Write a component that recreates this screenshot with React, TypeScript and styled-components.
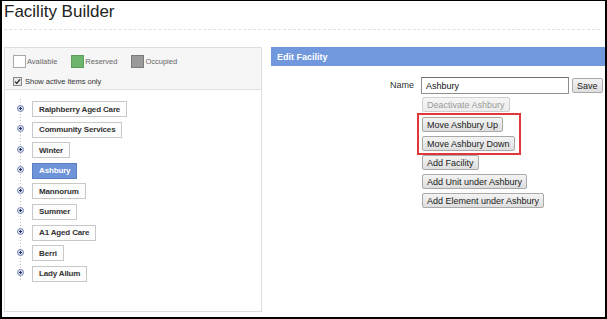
import styled, { createGlobalStyle } from "styled-components";

const GlobalStyle = createGlobalStyle`
  html, body {
    margin: 0;
    padding: 0;
    background: #fff;
  }
  body {
    font-family: "Liberation Sans", Arial, sans-serif;
    color: #333;
  }
`;

const Page = styled.div`
  width: 607px;
  height: 319px;
  box-sizing: border-box;
  border: 2px solid #000;
  border-top-width: 1px;
  overflow: hidden;
  background: #fff;
`;

const Title = styled.h1`
  margin: 0;
  padding: 1px 0 0 2px;
  font-size: 17px;
  font-weight: normal;
  line-height: 20px;
  color: #222;
`;

const Divider = styled.div`
  margin: 7px 5px 0 2px;
  border-top: 1px dashed #e2e2e2;
`;

const Columns = styled.div`
  display: flex;
  gap: 9px;
  margin-top: 17px;
  margin-left: 2px;
`;

const LeftPanel = styled.div`
  width: 258px;
  height: 265px;
  box-sizing: border-box;
  border: 1px solid #dedede;
  display: flex;
  flex-direction: column;
`;

const Legend = styled.div`
  background: #f6f6f6;
  border-bottom: 1px solid #e0e0e0;
  padding: 7px 0 0 8px;
  height: 42px;
  box-sizing: border-box;
`;

const LegendRow = styled.div`
  display: flex;
  align-items: center;
  height: 13px;
`;

const Swatch = styled.span<{ $fill: string; $edge: string }>`
  width: 13px;
  height: 13px;
  box-sizing: border-box;
  background: ${(p) => p.$fill};
  border: 1px solid ${(p) => p.$edge};
  margin-right: 1px;
`;

const LegendLabel = styled.span`
  font-size: 7.5px;
  color: #666;
  margin-right: 14px;
`;

const CheckRow = styled.label`
  display: flex;
  align-items: center;
  gap: 3px;
  margin-top: 9px;
  font-size: 7.5px;
  color: #333;
`;

const CheckBox = styled.span`
  width: 7px;
  height: 7px;
  border: 1px solid #888;
  background: #e8e8e8;
  display: flex;
  align-items: center;
  justify-content: center;
`;

const TreeList = styled.div`
  display: flex;
  flex-direction: column;
  gap: 4.6px;
  padding: 11px 0 0 12px;
  background-image: repeating-linear-gradient(
    to bottom,
    #bdbdbd 0 1px,
    transparent 1px 3px
  );
  background-size: 1px 185px;
  background-position: 15px 9px;
  background-repeat: no-repeat;
`;

const TreeRow = styled.div`
  display: flex;
  align-items: center;
  height: 16px;
`;

const Expander = styled.svg`
  width: 7px;
  height: 7px;
  margin: -2px 8px 0 0;
  flex: none;
`;

const NodeButton = styled.span<{ $active?: boolean }>`
  display: inline-flex;
  align-items: center;
  height: 16px;
  box-sizing: border-box;
  padding: 0 6px;
  font-size: 8px;
  font-weight: bold;
  letter-spacing: -0.15px;
  white-space: nowrap;
  color: ${(p) => (p.$active ? "#fff" : "#333")};
  background: ${(p) => (p.$active ? "#6f93d8" : "#fdfdfd")};
  border: 1px solid ${(p) => (p.$active ? "#5b7fc6" : "#c8c8c8")};
`;

const RightPanel = styled.div`
  flex: 1;
  display: flex;
  flex-direction: column;
`;

const PanelHeader = styled.div`
  height: 19px;
  background: #7198dd;
  color: #fff;
  font-size: 9px;
  font-weight: bold;
  display: flex;
  align-items: center;
  padding-left: 6px;
`;

const Form = styled.div`
  display: grid;
  grid-template-columns: 143px auto;
  column-gap: 7px;
  margin-top: 11px;
`;

const FieldLabel = styled.label`
  font-size: 9px;
  color: #333;
  text-align: right;
  line-height: 17px;
`;

const NameRow = styled.div`
  display: flex;
  align-items: center;
  gap: 3px;
`;

const TextInput = styled.div`
  width: 148px;
  height: 17px;
  box-sizing: border-box;
  border: 1px solid #8f8f8f;
  border-top-color: #6f6f6f;
  font-size: 9px;
  color: #111;
  display: flex;
  align-items: center;
  padding-left: 4px;
`;

const Actions = styled.div`
  grid-column: 2;
  display: flex;
  flex-direction: column;
  align-items: flex-start;
  gap: 4px;
  margin-top: 3px;
  padding-left: 1px;
`;

const ActionButton = styled.span<{ $disabled?: boolean }>`
  display: inline-flex;
  align-items: center;
  height: 15px;
  box-sizing: border-box;
  padding: 0 4px;
  font-size: 9px;
  white-space: nowrap;
  color: ${(p) => (p.$disabled ? "#9a9a9a" : "#1a1a1a")};
  background: ${(p) =>
    p.$disabled
      ? "linear-gradient(#f6f6f6, #ececec)"
      : "linear-gradient(#f4f4f4, #dedede)"};
  border: 1px solid ${(p) => (p.$disabled ? "#cfcfcf" : "#a9a9a9")};
  border-radius: 2px;
`;

const Highlight = styled.div`
  position: relative;
  display: flex;
  flex-direction: column;
  align-items: flex-start;
  gap: 4px;
  margin-top: 1px;
  &::after {
    content: "";
    position: absolute;
    top: -4px;
    bottom: -4px;
    left: -5px;
    right: -6px;
    border: 2px solid #e0373a;
  }
`;

const nodes = [
  "Ralphberry Aged Care",
  "Community Services",
  "Winter",
  "Ashbury",
  "Mannorum",
  "Summer",
  "A1 Aged Care",
  "Berri",
  "Lady Allum",
];

const PlusIcon = () => (
  <Expander viewBox="0 0 7 7">
    <circle cx="3.5" cy="3.5" r="3" fill="#d9dff0" stroke="#6a78a8" strokeWidth="0.9" />
    <path d="M2 3.5h3M3.5 2v3" stroke="#27305a" strokeWidth="1" />
  </Expander>
);

export default function App() {
  return (
    <>
      <GlobalStyle />
      <Page>
        <Title>Facility Builder</Title>
        <Divider />
        <Columns>
          <LeftPanel>
            <Legend>
              <LegendRow>
                <Swatch $fill="#fff" $edge="#a8a8a8" />
                <LegendLabel>Available</LegendLabel>
                <Swatch $fill="#6db46d" $edge="#5aa05a" />
                <LegendLabel>Reserved</LegendLabel>
                <Swatch $fill="#9a9a9a" $edge="#7a7a7a" />
                <LegendLabel>Occupied</LegendLabel>
              </LegendRow>
              <CheckRow>
                <CheckBox>
                  <svg width="7" height="7" viewBox="0 0 7 7">
                    <path d="M1 3.6l1.8 1.8L6 1.4" fill="none" stroke="#222" strokeWidth="1.3" />
                  </svg>
                </CheckBox>
                Show active items only
              </CheckRow>
            </Legend>
            <TreeList>
              {nodes.map((n) => (
                <TreeRow key={n}>
                  <PlusIcon />
                  <NodeButton $active={n === "Ashbury"}>{n}</NodeButton>
                </TreeRow>
              ))}
            </TreeList>
          </LeftPanel>
          <RightPanel>
            <PanelHeader>Edit Facility</PanelHeader>
            <Form>
              <FieldLabel>Name</FieldLabel>
              <NameRow>
                <TextInput>Ashbury</TextInput>
                <ActionButton>Save</ActionButton>
              </NameRow>
              <Actions>
                <ActionButton $disabled>Deactivate Ashbury</ActionButton>
                <Highlight>
                  <ActionButton>Move Ashbury Up</ActionButton>
                  <ActionButton>Move Ashbury Down</ActionButton>
                </Highlight>
                <ActionButton>Add Facility</ActionButton>
                <ActionButton>Add Unit under Ashbury</ActionButton>
                <ActionButton>Add Element under Ashbury</ActionButton>
              </Actions>
            </Form>
          </RightPanel>
        </Columns>
      </Page>
    </>
  );
}
